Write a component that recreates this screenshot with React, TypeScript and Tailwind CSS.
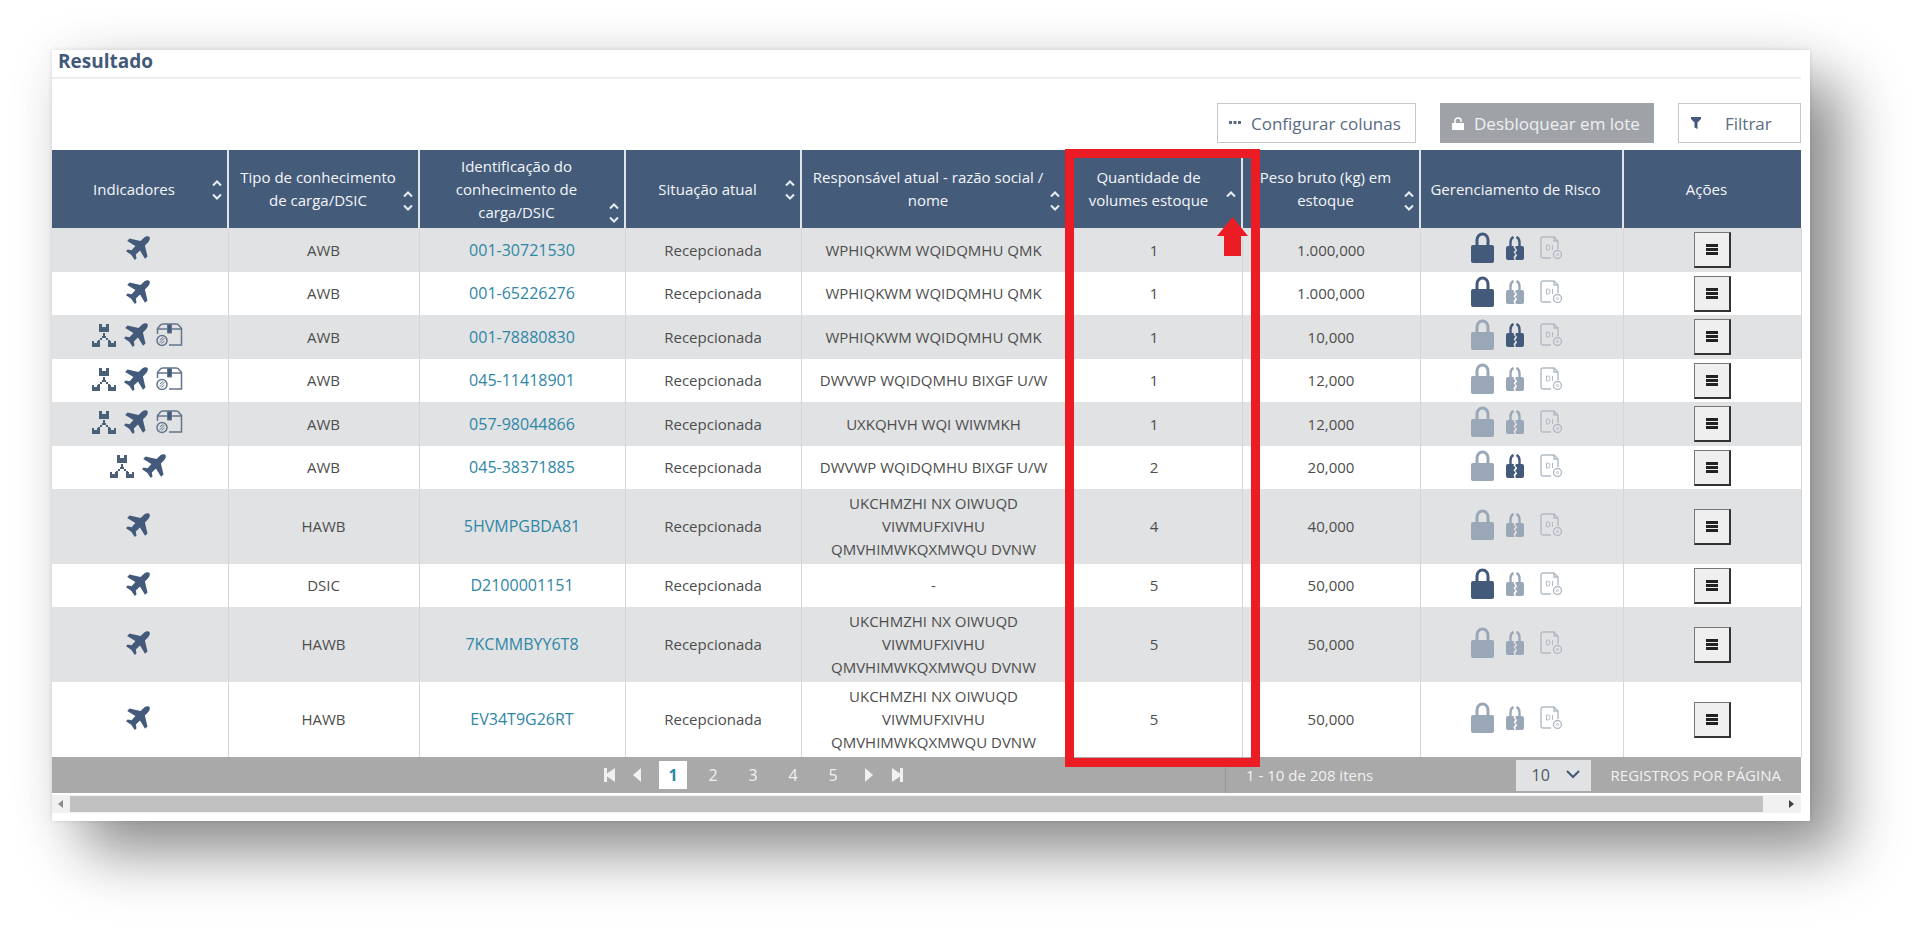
import React from 'react';
import { clsx } from 'clsx';

type Row = {
  icons: string[];
  tipo: string;
  id: string;
  nome: string;
  volumes: string;
  peso: string;
  bloqueio: boolean;
  parcial: boolean;
};

const WPH = 'WPHIQKWM WQIDQMHU QMK';
const DWV = 'DWVWP WQIDQMHU BIXGF U/W';
const UKC = 'UKCHMZHI NX OIWUQD VIWMUFXIVHU QMVHIMWKQXMWQU DVNW';

const rows: Row[] = [
  { icons: ['plane'], tipo: 'AWB', id: '001-30721530', nome: WPH, volumes: '1', peso: '1.000,000', bloqueio: true, parcial: true },
  { icons: ['plane'], tipo: 'AWB', id: '001-65226276', nome: WPH, volumes: '1', peso: '1.000,000', bloqueio: true, parcial: false },
  { icons: ['tree', 'plane', 'box'], tipo: 'AWB', id: '001-78880830', nome: WPH, volumes: '1', peso: '10,000', bloqueio: false, parcial: true },
  { icons: ['tree', 'plane', 'box'], tipo: 'AWB', id: '045-11418901', nome: DWV, volumes: '1', peso: '12,000', bloqueio: false, parcial: false },
  { icons: ['tree', 'plane', 'box'], tipo: 'AWB', id: '057-98044866', nome: 'UXKQHVH WQI WIWMKH', volumes: '1', peso: '12,000', bloqueio: false, parcial: false },
  { icons: ['tree', 'plane'], tipo: 'AWB', id: '045-38371885', nome: DWV, volumes: '2', peso: '20,000', bloqueio: false, parcial: true },
  { icons: ['plane'], tipo: 'HAWB', id: '5HVMPGBDA81', nome: UKC, volumes: '4', peso: '40,000', bloqueio: false, parcial: false },
  { icons: ['plane'], tipo: 'DSIC', id: 'D2100001151', nome: '-', volumes: '5', peso: '50,000', bloqueio: true, parcial: false },
  { icons: ['plane'], tipo: 'HAWB', id: '7KCMMBYY6T8', nome: UKC, volumes: '5', peso: '50,000', bloqueio: false, parcial: false },
  { icons: ['plane'], tipo: 'HAWB', id: 'EV34T9G26RT', nome: UKC, volumes: '5', peso: '50,000', bloqueio: false, parcial: false },
];

const columns = [
  { title: 'Indicadores', width: 'w-[176px]', sort: 'both' },
  { title: 'Tipo de conhecimento de carga/DSIC', width: 'w-[191px]', sort: 'both' },
  { title: 'Identificação do conhecimento de carga/DSIC', width: 'w-[206px]', sort: 'both' },
  { title: 'Situação atual', width: 'w-[176px]', sort: 'both' },
  { title: 'Responsável atual - razão social / nome', width: 'w-[265px]', sort: 'both' },
  { title: 'Quantidade de volumes estoque', width: 'w-[176px]', sort: 'asc' },
  { title: 'Peso bruto (kg) em estoque', width: 'w-[178px]', sort: 'both' },
  { title: 'Gerenciamento de Risco', width: 'w-[203px]', sort: '' },
  { title: 'Ações', width: 'w-[178px]', sort: '' },
];

const SortIcon = ({ sort }: { sort: string }) => (
  <svg viewBox="0 0 10 23" className="h-[23px] w-[10px] shrink-0 fill-none stroke-[#e6ecf3] stroke-2">
    <path d="M1 7.5 5 3.5 9 7.5" />
    {sort === 'both' && <path d="M1 16.5 5 20.5 9 16.5" />}
  </svg>
);

const PlaneIcon = () => (
  <svg viewBox="0 0 24 24" className="size-6 fill-[#435a7b]">
    <path d="M23.3.7c-1.100-1-3.800-.5-5.300 1L14.500 5.100 3.500 2.500 1.200 5l8.200 5-3.800 4.200-4-.7L0 15.200l5.200 3.600L8.800 24l1.700-1.600-.7-4L14 14.600l5 8.200 2.500-2.300L18.900 9.500 22.300 6c1.500-1.500 2-4.200 1-5.300z" />
  </svg>
);

const TreeIcon = () => (
  <svg viewBox="0 0 24 24" className="size-6 fill-[#4a5f78]">
    <path d="M7 1h3v3h4V1h3v8H7zM0 18h2v2h3v-2h3v6H0zM16 18h3v2h3v-2h2v6h-8zM11 10h2v3h-2zM10 13h4v2h-4zM8 15h2v2H8zM14 15h2v2h-2zM6 17h2v2H6zM16 17h2v2h-2z" />
  </svg>
);

const BoxIcon = () => (
  <svg viewBox="0 0 27 24" className="h-6 w-[27px] fill-none stroke-[#63758c]">
    <path d="M1.500 11V5.500L4 2.500Q5 1 7 1H20Q22 1 23 2.500L25.500 5.500V22H13M1.500 6H11M16 6h9.500" strokeWidth="1.500" />
    <path d="M11.500 1.500h4V10h-4z" className="fill-[#435a7b]" />
    <circle cx="6" cy="17.500" r="5" strokeWidth="1.500" />
    <path d="M3.500 20l5-5M3.800 17l3-2.500M5.500 20.500l3-2.500" />
  </svg>
);

const LockIcon = () => (
  <svg viewBox="0 0 23 32" className="h-8 w-[23px]">
    <path d="M6 14V8a5.500 6 0 0 1 11 0v6" fill="none" stroke="currentColor" strokeWidth="3" />
    <rect y="13" width="23" height="18" rx="2" fill="currentColor" />
  </svg>
);

const BrokenLockIcon = () => (
  <svg viewBox="0 0 18 24" className="h-6 w-[18px]">
    <path d="M4.500 11V6.500C4.500 4 5.500 2 7.500 1M13.500 11V6.500C13.500 4 12.500 2 10.500 1" fill="none" stroke="currentColor" strokeWidth="2.400" />
    <path d="M2 10h6l-.5 1.500 2 2.300-2 2.400 2 2.400-2 2.400 1 3H2q-2 0-2-2V12q0-2 2-2zM10 10h6q2 0 2 2v10q0 2-2 2h-6l-.8-2 2-2.800-2-2.500 2-2.500-2-2.700z" fill="currentColor" />
  </svg>
);

const DocIcon = () => (
  <svg viewBox="0 0 23 24" className="h-6 w-[23px] fill-none stroke-[#b3bac4]">
    <path d="M11 22H3a2 2 0 0 1-2-2V3a2 2 0 0 1 2-2h11l4 4v8M14 1v4h4" strokeWidth="1.400" />
    <path d="M6.500 9v5h1.500a2 2.500 0 0 0 0-5zM12.500 9v5" />
    <circle cx="17.500" cy="18.500" r="4" strokeWidth="1.400" />
    <circle cx="17.500" cy="18.500" r="1" />
  </svg>
);

const indicators: Record<string, React.ReactNode> = {
  tree: <TreeIcon key="tree" />,
  plane: <PlaneIcon key="plane" />,
  box: <BoxIcon key="box" />,
};

const Toolbar = () => (
  <div className="flex justify-end gap-6 pt-6 pb-[7px] text-[17px] whitespace-nowrap text-[#5a6b83]">
    <button className="flex h-10 w-[199px] items-center gap-[10px] border border-[#c5c8cb] px-[11px]">
      <svg viewBox="0 0 12 4" className="h-1 w-3 fill-[#5a6b83]">
        <path d="M0 0h3v3H0zM4.500 0h3v3h-3zM9 0h3v3H9z" />
      </svg>
      Configurar colunas
    </button>
    <button className="flex h-10 w-[214px] items-center gap-[10px] bg-[#9fa3a8] px-3 text-[#eef0f2]">
      <svg viewBox="0 0 12 13" className="h-[13px] w-3">
        <path d="M3 6V3.500a3 2.500 0 0 1 6 0V5" fill="none" stroke="white" strokeWidth="1.500" />
        <path d="M0 6h12v7H0z" fill="white" />
      </svg>
      Desbloquear em lote
    </button>
    <button className="flex h-10 w-[123px] items-center gap-6 border border-[#c5c8cb] px-3">
      <svg viewBox="0 0 10 12" className="h-3 w-[10px] fill-[#435a7b]">
        <path d="M0 0h10v2L6.500 5.500V12l-3-1.500v-5L0 2z" />
      </svg>
      Filtrar
    </button>
  </div>
);

const Pagination = () => (
  <div className="flex h-9 items-center bg-[#a9a9a9] text-[#f1f1f1]">
    <nav aria-label="Paginação" className="flex flex-1 items-center justify-end pr-[314px]">
      <button aria-label="Primeira" className="flex w-7 justify-center">
        <svg viewBox="0 0 11 14" className="h-[14px] w-[11px] fill-current"><path d="M0 0h3v5.500L11 0v14L3 8.500V14H0z" /></svg>
      </button>
      <button aria-label="Anterior" className="flex w-7 justify-center">
        <svg viewBox="0 0 8 14" className="h-[14px] w-2 fill-current"><path d="M8 0v14L0 7z" /></svg>
      </button>
      <div className="flex gap-3 px-2 text-[16px]">
        {['1', '2', '3', '4', '5'].map((page) => (
          <button
            key={page}
            className={clsx('h-7 w-7', page === '1' && 'bg-white font-bold text-[#2f86a6]')}
          >
            {page}
          </button>
        ))}
      </div>
      <button aria-label="Próxima" className="flex w-7 justify-center">
        <svg viewBox="0 0 8 14" className="h-[14px] w-2 fill-current"><path d="M0 0v14l8-7z" /></svg>
      </button>
      <button aria-label="Última" className="flex w-7 justify-center">
        <svg viewBox="0 0 11 14" className="h-[14px] w-[11px] fill-current"><path d="M11 0H8v5.500L0 0v14l8-5.500V14h3z" /></svg>
      </button>
    </nav>
    <div className="flex h-full w-[576px] items-center border-l border-[#9a9a9a] pr-5 pl-5">
      <span className="flex-1">1 - 10 de 208 itens</span>
      <div className="relative mr-5">
        <select id="registros" className="h-[31px] w-[75px] appearance-none bg-[#e0e2e4] pl-4 text-[16px] text-[#4c5866]">
          <option>10</option>
        </select>
        <svg viewBox="0 0 14 9" className="pointer-events-none absolute top-[10px] right-[11px] h-[9px] w-[14px] fill-none stroke-[#43597a] stroke-2">
          <path d="M1 1l6 6 6-6" />
        </svg>
      </div>
      <label htmlFor="registros">REGISTROS POR PÁGINA</label>
    </div>
  </div>
);

const ScrollBar = () => (
  <div className="mt-[2px] flex h-[18px] items-center bg-[#f1f1f1]">
    <svg viewBox="0 0 18 18" className="w-[18px] fill-[#8c8c8c]"><path d="M11 5v8L6 9z" /></svg>
    <div className="h-4 flex-1 bg-[#c1c1c1]" />
    <svg viewBox="0 0 18 18" className="ml-5 w-[18px] fill-[#404040]"><path d="M6 5v8l5-4z" /></svg>
  </div>
);

const App = () => {
  return (
    <main className="overflow-hidden bg-white pt-[50px] pr-[110px] pb-[109px] pl-[52px] font-['Open_Sans','Noto_Sans',sans-serif] text-[15px] leading-[23px]">
      <section className="bg-white pr-[9px] pb-2 shadow-[0_0_4px_rgba(0,0,0,0.12),0_0_50px_rgba(0,0,0,0.07),33px_33px_56px_rgba(0,0,0,0.42)]">
        <h1 className="border-b-2 border-[#eeeeee] pb-1 pl-[6px] text-[19px] leading-[23px] font-bold text-[#43597a]">Resultado</h1>
        <Toolbar />
        <div className="relative">
          <table className="w-full table-fixed border-collapse text-center text-[#4d4d4d]">
            <thead>
              <tr className="h-[78px] bg-[#455b7a] text-[#f3f6f9]">
                {columns.map((col) => (
                  <th key={col.title} className={clsx(col.width, 'border-r-2 border-[#dfe4ea] p-0 font-normal last:border-r-0')}>
                    {col.sort ? (
                      <button className="flex w-full items-end pr-[5px] pl-1">
                        <span className="flex-1">{col.title}</span>
                        <SortIcon sort={col.sort} />
                      </button>
                    ) : (
                      <span className="block pr-4 pl-1">{col.title}</span>
                    )}
                  </th>
                ))}
              </tr>
            </thead>
            <tbody>
              {rows.map((row) => (
                <tr key={row.id} className="h-[43px] odd:h-[44px] odd:bg-[#e0e2e3] [&>td]:border-r [&>td]:border-[#d4d6d8] [&>td]:p-0">
                  <td>
                    <div className="flex justify-center gap-2 pr-1 pb-1">{row.icons.map((name) => indicators[name])}</div>
                  </td>
                  <td>{row.tipo}</td>
                  <td><a href="#" className="text-[16px] text-[#2f86a6]">{row.id}</a></td>
                  <td>Recepcionada</td>
                  <td><div className="px-4 py-[3px]">{row.nome}</div></td>
                  <td>{row.volumes}</td>
                  <td>{row.peso}</td>
                  <td>
                    <div className="flex items-center justify-center pr-[10px] pb-1">
                      <span className={row.bloqueio ? 'text-[#435a7b]' : 'text-[#9aa7b7]'}><LockIcon /></span>
                      <span className={clsx('ml-3', row.parcial ? 'text-[#435a7b]' : 'text-[#9aa7b7]')}><BrokenLockIcon /></span>
                      <span className="ml-4"><DocIcon /></span>
                    </div>
                  </td>
                  <td>
                    <button aria-label="Ações" className="inline-flex h-9 w-[37px] items-center justify-center border-t border-r-2 border-b-2 border-l border-[#333333] border-t-[#777777] border-l-[#777777] bg-[#efefef] align-middle">
                      <svg viewBox="0 0 12 11" className="h-[11px] w-3 fill-[#222222]"><path d="M0 0h12v3H0zM0 4h12v3H0zM0 8h12v3H0z" /></svg>
                    </button>
                  </td>
                </tr>
              ))}
            </tbody>
          </table>

          {/* Highlighted column */}
          <div className="pointer-events-none absolute -top-px -bottom-[10px] left-[57.9%] w-[195px] border-9 border-[#ec1c24]" />
          <svg viewBox="0 0 31 39" className="pointer-events-none absolute top-[67px] left-[66.6%] h-[39px] w-[31px] fill-[#ec1c24]">
            <path d="M15.500 0 31 19h-7v20H7V19H0z" />
          </svg>
        </div>
        <Pagination />
        <ScrollBar />
      </section>
    </main>
  );
};

export default App;
